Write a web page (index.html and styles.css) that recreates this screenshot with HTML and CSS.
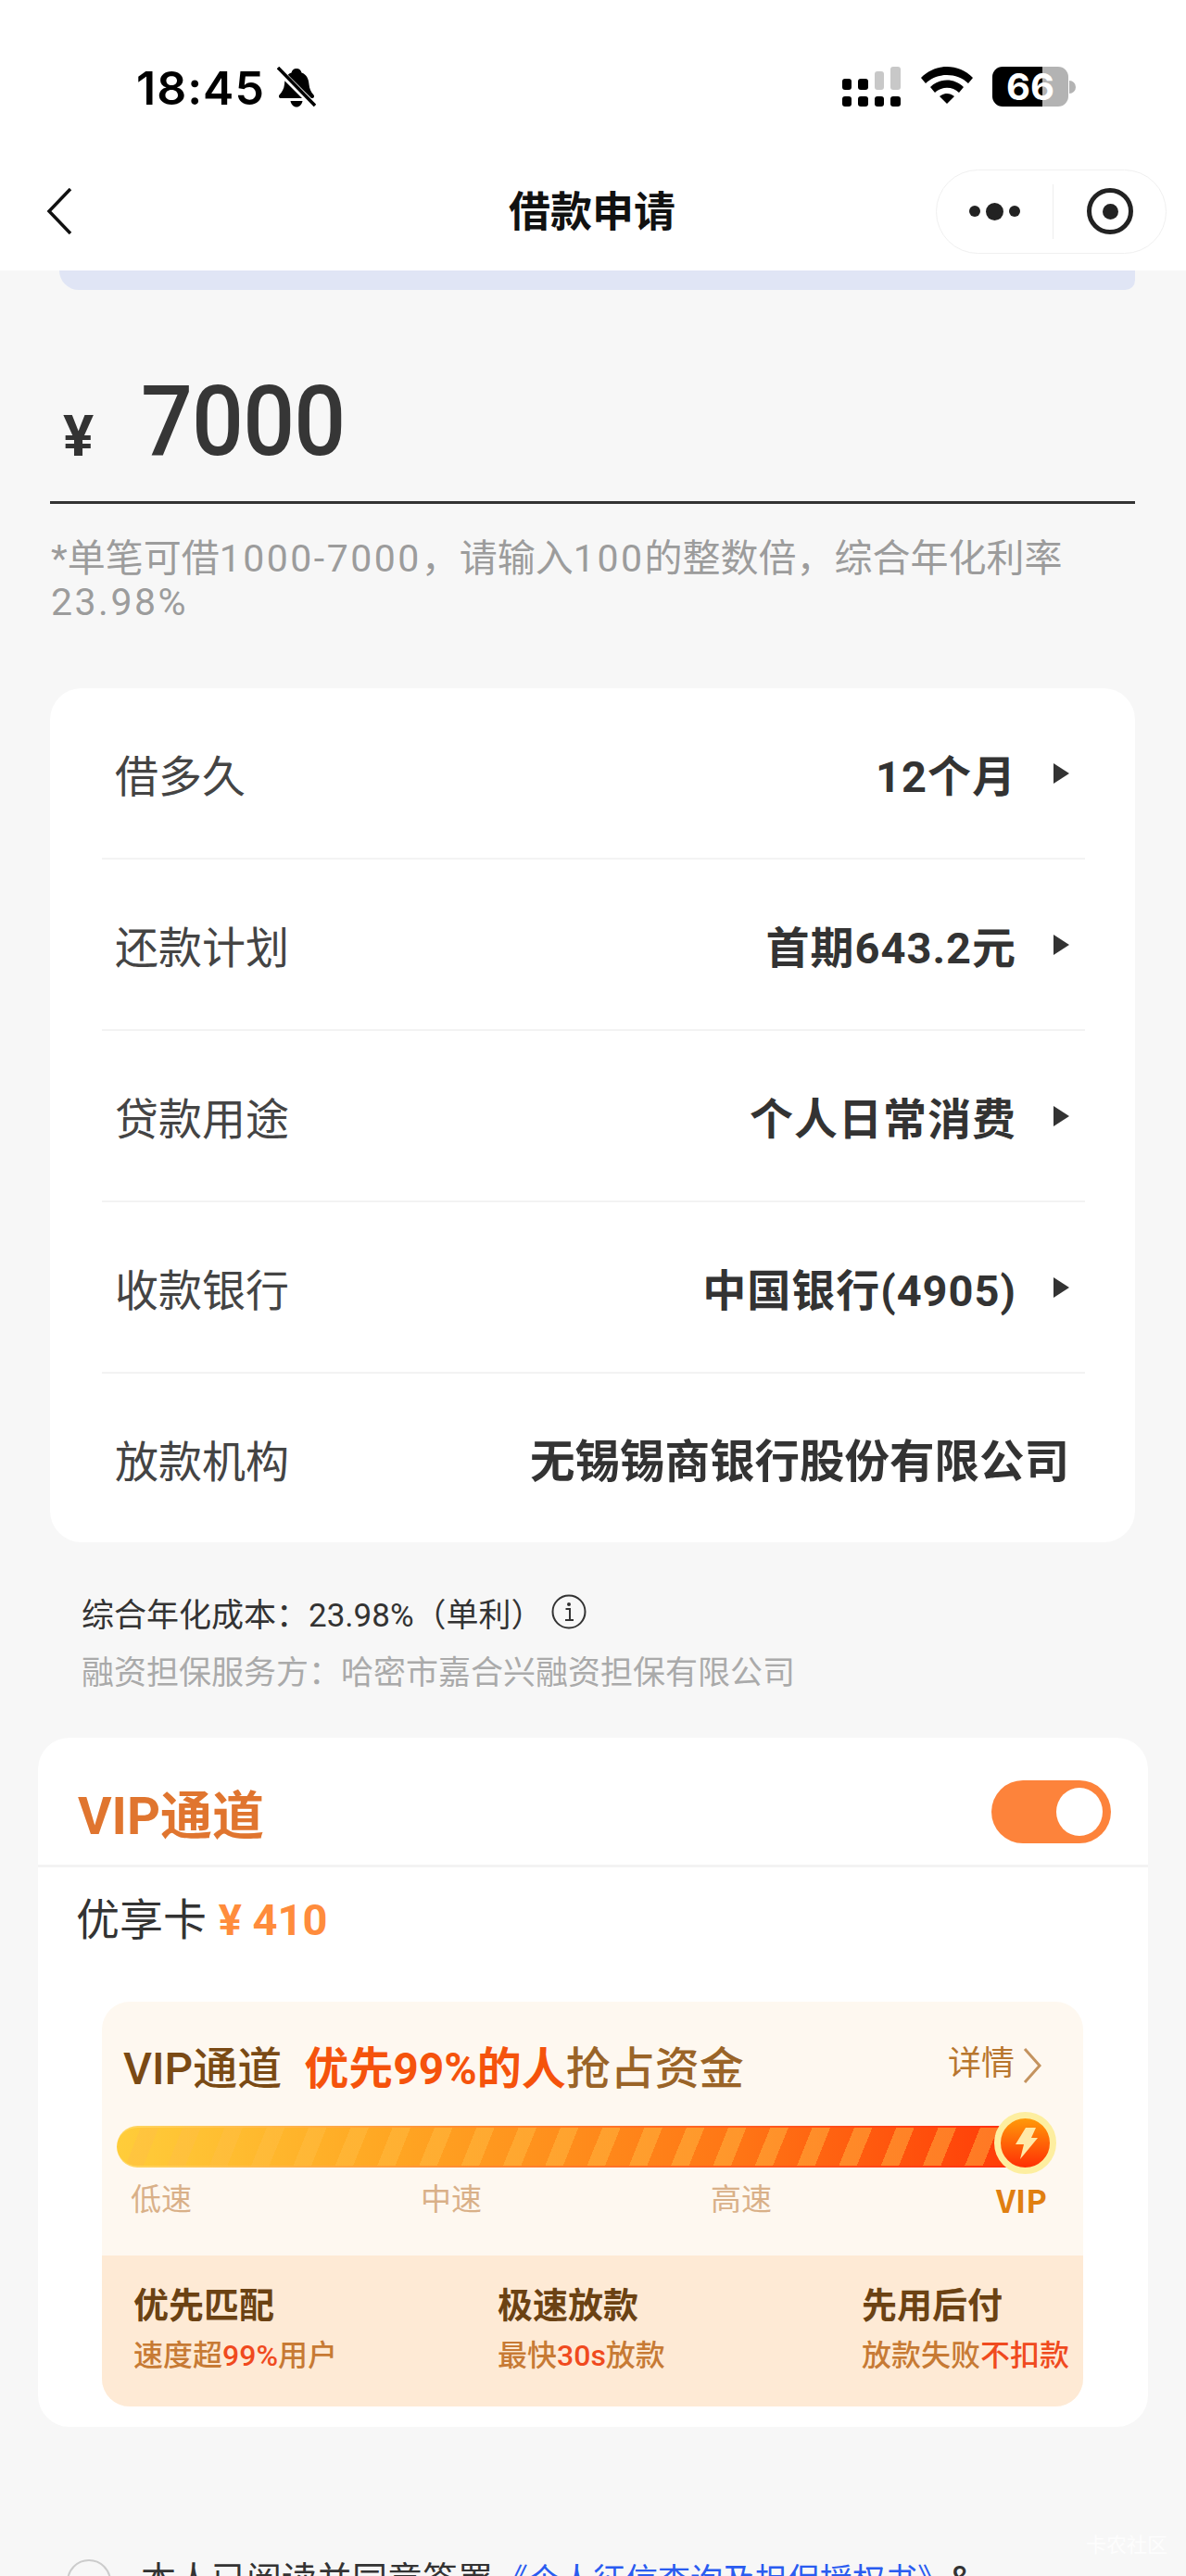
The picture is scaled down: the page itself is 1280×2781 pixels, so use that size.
FILE: index.html
```html
<!DOCTYPE html>
<html lang="zh-CN">

<head>
    <meta charset="UTF-8">
    <meta name="viewport" content="width=device-width, initial-scale=1.0">
    <title>借款申请</title>
    <link rel="stylesheet" href="styles.css">
</head>

<body>
    <div class="page">

        <header class="top">
            <div class="status">
                <div class="status-left">
                    <span class="time">18:45</span>
                    <svg class="bell" width="42" height="46" viewBox="0 0 42 46">
                        <path d="M21 2c3 0 5 2 5.500 4.500C32 8.500 34 13 34.500 19c.5 5 2 8 5 11.500 1.200 1.500.3 3.500-1.500 3.500H4c-1.800 0-2.700-2-1.500-3.500C5.500 27 7.500 24 8 19 8.500 13 10 8.500 15.500 6.500 16 4 18 2 21 2z" fill="#000"/>
                        <path d="M14.500 37h13c-.8 4-3.400 6.500-6.500 6.500s-5.700-2.500-6.500-6.500z" fill="#000"/>
                        <path d="M2 4l38 38" stroke="#fff" stroke-width="7"/>
                        <path d="M1 1l40 41" stroke="#000" stroke-width="3.500"/>
                    </svg>
                </div>
                <div class="status-right">
                    <svg class="signal" width="64" height="44" viewBox="0 0 64 44">
                        <rect x="0" y="13" width="10" height="12" rx="3" fill="#000"/>
                        <rect x="17" y="13" width="11" height="12" rx="3" fill="#000"/>
                        <rect x="35" y="5" width="10" height="20" rx="3" fill="#c8c8c8"/>
                        <rect x="52" y="0" width="11" height="25" rx="3" fill="#c8c8c8"/>
                        <rect x="0" y="32" width="10" height="11" rx="3" fill="#000"/>
                        <rect x="17" y="32" width="11" height="11" rx="3" fill="#000"/>
                        <rect x="35" y="32" width="10" height="11" rx="3" fill="#000"/>
                        <rect x="52" y="32" width="11" height="11" rx="3" fill="#000"/>
                    </svg>
                    <svg class="wifi" width="56" height="40" viewBox="0 0 56 40">
                        <path d="M0 12C15-4 41-4 56 12l-5 6C39 6 17 6 5 18z" fill="#000"/>
                        <path d="M10 22c10-10 26-10 36 0l-5 6c-7-7-19-7-26 0z" fill="#000"/>
                        <path d="M20 32c5-4 11-4 16 0l-8 8z" fill="#000"/>
                    </svg>
                    <div class="battery">
                        <div class="battery-body">
                            <span class="battery-num">66</span>
                        </div>
                        <div class="battery-cap"></div>
                    </div>
                </div>
            </div>
            <nav class="nav">
                <svg class="back" width="28" height="50" viewBox="0 0 28 50">
                    <path d="M26 1L3 25l23 24" fill="none" stroke="#111" stroke-width="3.500"/>
                </svg>
                <h1 class="nav-title">借款申请</h1>
                <div class="capsule">
                    <div class="capsule-dots">
                        <i class="dot"></i>
                        <i class="dot dot-big"></i>
                        <i class="dot"></i>
                    </div>
                    <div class="capsule-line"></div>
                    <div class="capsule-target"><i></i></div>
                </div>
            </nav>
        </header>

        <div class="banner"></div>

        <section class="amount">
            <span class="amount-sign">¥</span>
            <span class="amount-num">7000</span>
        </section>
        <p class="hint">*单笔可借<span>1000-7000</span>，请输入<span>100</span>的整数倍，综合年化利率<br><span>23.98%</span></p>

        <section class="card">
            <div class="row">
                <span class="row-label">借多久</span>
                <span class="row-value">12个月</span>
                <i class="arrow"></i>
            </div>
            <div class="row">
                <span class="row-label">还款计划</span>
                <span class="row-value">首期643.2元</span>
                <i class="arrow"></i>
            </div>
            <div class="row">
                <span class="row-label">贷款用途</span>
                <span class="row-value">个人日常消费</span>
                <i class="arrow"></i>
            </div>
            <div class="row">
                <span class="row-label">收款银行</span>
                <span class="row-value">中国银行(4905)</span>
                <i class="arrow"></i>
            </div>
            <div class="row">
                <span class="row-label">放款机构</span>
                <span class="row-value row-value-last">无锡锡商银行股份有限公司</span>
            </div>
        </section>

        <section class="info">
            <p class="info-cost">
                <span>综合年化成本：</span><span class="info-rate">23.98%（单利）</span>
                <svg class="info-icon" width="38" height="38" viewBox="0 0 38 38">
                    <circle cx="19" cy="19" r="17.500" fill="none" stroke="#333" stroke-width="2"/>
                    <circle cx="19" cy="11" r="2" fill="#333"/>
                    <path d="M15.500 16H20v12M15 28h9" fill="none" stroke="#333" stroke-width="2"/>
                </svg>
            </p>
            <p class="info-guarantee">融资担保服务方：<span class="info-company">哈密市嘉合兴融资担保有限公司</span></p>
        </section>

        <section class="vip">
            <div class="vip-head">
                <h2 class="vip-title">VIP通道</h2>
                <div class="switch"><i></i></div>
            </div>
            <p class="vip-price">优享卡 <strong>¥ 410</strong></p>

            <div class="speed">
                <div class="speed-top">
                    <div class="speed-head">
                        <p class="speed-title">VIP通道<em>优先99%的人</em><span>抢占资金</span></p>
                        <div class="speed-more">
                            详情
                            <svg width="22" height="40" viewBox="0 0 22 40">
                                <path d="M3 2l16 18L3 38" fill="none" stroke="#c4935f" stroke-width="3"/>
                            </svg>
                        </div>
                    </div>
                    <div class="bar">
                        <div class="bar-fill"></div>
                        <div class="bar-knob">
                            <svg width="26" height="34" viewBox="0 0 26 34">
                                <path d="M13 0h11l-5 11h7L7 34l4-16H2z" fill="#ffe9a8"/>
                            </svg>
                        </div>
                    </div>
                    <div class="bar-labels">
                        <span>低速</span>
                        <span>中速</span>
                        <span>高速</span>
                        <span class="bar-vip">VIP</span>
                    </div>
                </div>
                <div class="speed-bottom">
                    <div class="perk">
                        <h3>优先匹配</h3>
                        <p>速度超<b>99%</b>用户</p>
                    </div>
                    <div class="perk">
                        <h3>极速放款</h3>
                        <p>最快<b>30s</b>放款</p>
                    </div>
                    <div class="perk">
                        <h3>先用后付</h3>
                        <p>放款失败<b>不扣款</b></p>
                    </div>
                </div>
            </div>
        </section>

        <div class="agree">
            <i class="agree-check"></i>
            <p class="agree-text">本人已阅读并同意签署<a>《个人征信查询及担保授权书》</a>&amp;</p>
        </div>

        <span class="watermark">卡农社区</span>
    </div>
</body>

</html>
```

FILE: styles.css
```css
html, body {
    margin: 0;
    padding: 0;
    height: 2781px;
    overflow: hidden;
}

body {
    font-family: Roboto, "Noto Sans CJK SC", sans-serif;
    color: #333;
    background-color: #f7f7f7;
    text-spacing-trim: space-all;
}

p, h1, h2, h3 {
    margin: 0;
    font-weight: normal;
}

.page {
    position: relative;
    width: 1280px;
    height: 2781px;
    overflow: hidden;
}

/* Status bar and nav */
.top {
    height: 292px;
    background-color: #fff;
}

.status {
    display: flex;
    justify-content: space-between;
    height: 182px;
    padding: 72px 119px 0 147px;
    box-sizing: border-box;
}

.status-left {
    display: flex;
    align-items: flex-start;
    gap: 13px;
}

.time {
    font-family: Inter, sans-serif;
    font-size: 50px;
    font-weight: 600;
    line-height: 46px;
    letter-spacing: 1px;
    color: #000;
}

.status-right {
    display: flex;
    align-items: flex-start;
    gap: 21px;
}

.battery {
    display: flex;
    align-items: center;
}

.battery-body {
    width: 82px;
    height: 43px;
    border-radius: 11px;
    background: linear-gradient(90deg, #000 66%, #b3b3b3 66%);
    text-align: center;
}

.battery-num {
    font-family: Inter, sans-serif;
    font-size: 40px;
    font-weight: 700;
    line-height: 43px;
    color: #fff;
}

.battery-cap {
    width: 7px;
    height: 14px;
    margin-left: 1px;
    border-radius: 0 7px 7px 0;
    background-color: #b3b3b3;
}

.nav {
    display: flex;
    align-items: center;
    height: 92px;
    padding: 0 21px 0 50px;
}

.nav-title {
    flex: 1;
    padding: 0 0 5px 190px;
    text-align: center;
    font-size: 45px;
    font-weight: 700;
    color: #111;
}

.capsule {
    display: flex;
    align-items: center;
    width: 249px;
    height: 91px;
    border: 1px solid #f0f0f0;
    border-radius: 46px;
    box-sizing: border-box;
}

.capsule-dots {
    display: flex;
    align-items: center;
    justify-content: center;
    gap: 5px;
    width: 125px;
}

.dot {
    width: 12px;
    height: 12px;
    border-radius: 50%;
    background-color: #222;
}

.dot-big {
    width: 19px;
    height: 19px;
    margin: 0 1px;
}

.capsule-line {
    width: 1px;
    height: 59px;
    background-color: #eee;
}

.capsule-target {
    display: flex;
    align-items: center;
    justify-content: center;
    width: 50px;
    height: 50px;
    margin-left: 36px;
    border: 5px solid #222;
    border-radius: 50%;
    box-sizing: border-box;
}

.capsule-target i {
    width: 17px;
    height: 17px;
    border-radius: 50%;
    background-color: #222;
}

.banner {
    height: 21px;
    margin: 0 55px 0 64px;
    border-radius: 0 0 18px 36px;
    background-color: #e0e5f5;
}

/* Amount */
.amount {
    display: flex;
    align-items: flex-end;
    height: 231px;
    margin: 0 55px 0 54px;
    padding-left: 14px;
    border-bottom: 3px solid #333;
    box-sizing: border-box;
}

.amount-sign {
    width: 84px;
    margin-bottom: 36px;
    font-size: 62px;
    font-weight: 700;
    line-height: 68px;
    color: #333;
}

.amount-num {
    margin-bottom: 24px;
    font-size: 106px;
    font-weight: 500;
    line-height: 124px;
    letter-spacing: -1px;
    color: #363636;
    transform: scaleX(0.93);
    transform-origin: left;
}

.hint {
    height: 199px;
    margin-left: 55px;
    padding-top: 36px;
    box-sizing: border-box;
    font-size: 41px;
    line-height: 47px;
    color: #9c9c9c;
}

.hint span {
    letter-spacing: 2.500px;
}

/* Loan rows */
.card {
    height: 922px;
    margin: 0 55px 0 54px;
    padding: 0 56px;
    border-radius: 34px;
    background-color: #fff;
    box-sizing: border-box;
}

.row {
    display: flex;
    align-items: center;
    height: 185px;
    margin: 0 -2px 0 0;
    padding: 0 17px 0 14px;
    border-bottom: 2px solid #f3f3f3;
    box-sizing: border-box;
}

.row:last-child {
    border-bottom: 0;
    height: 182px;
}

.row-label {
    flex: 1;
    font-size: 47px;
    color: #444;
}

.row-value {
    font-size: 47px;
    font-weight: 700;
    letter-spacing: 1px;
    color: #333;
}

.row-value-last {
    font-size: 48.500px;
    letter-spacing: 0;
}

.arrow {
    width: 0;
    height: 0;
    margin-left: 40px;
    border-left: 17px solid #333;
    border-top: 11px solid transparent;
    border-bottom: 11px solid transparent;
}

/* Rate info */
.info {
    height: 211px;
    padding: 50px 0 0 88px;
    box-sizing: border-box;
}

.info-cost {
    display: flex;
    align-items: center;
    height: 50px;
    font-size: 35px;
    color: #333;
}

.info-icon {
    margin-left: 8px;
}

.info-guarantee {
    margin-top: 17px;
    font-size: 35px;
    line-height: 50px;
    color: #aaa;
}

/* VIP card */
.vip {
    height: 744px;
    margin: 0 41px;
    border-radius: 34px;
    background-color: #fff;
}

.vip-head {
    display: flex;
    align-items: center;
    justify-content: space-between;
    height: 140px;
    padding: 22px 0 0 43px;
    border-bottom: 3px solid #f3f3f3;
    box-sizing: border-box;
}

.vip-title {
    font-size: 56px;
    font-weight: 700;
    color: #e0752f;
}

.switch {
    display: flex;
    align-items: center;
    justify-content: flex-end;
    width: 129px;
    height: 68px;
    margin-right: 40px;
    padding-right: 9px;
    border-radius: 34px;
    background-color: #fd833b;
    box-sizing: border-box;
}

.switch i {
    width: 50px;
    height: 52px;
    border-radius: 50%;
    background-color: #fff;
}

.vip-price {
    height: 145px;
    padding: 23px 0 0 41px;
    box-sizing: border-box;
    font-size: 47px;
    line-height: 68px;
    color: #333;
}

.vip-price strong {
    margin-left: 1px;
    font-weight: 700;
    color: #ff8c3c;
}

.speed {
    height: 437px;
    margin: 0 70px 0 69px;
    border-radius: 30px;
    overflow: hidden;
    background-color: #fef8f0;
}

.speed-top {
    height: 274px;
    padding: 0 0 0 16px;
    box-sizing: border-box;
}

.speed-head {
    display: flex;
    justify-content: space-between;
    height: 134px;
    padding: 40px 44px 0 7px;
    box-sizing: border-box;
}

.speed-title {
    font-size: 48px;
    font-weight: 500;
    line-height: 66px;
    color: #7a4a14;
}

.speed-title em {
    margin-left: 24px;
    font-style: normal;
    font-weight: 700;
    color: #f5530c;
}

.speed-title span {
    color: #9a6428;
}

.speed-more {
    display: flex;
    align-items: flex-start;
    gap: 8px;
    font-size: 36px;
    line-height: 54px;
    color: #b8762e;
}

.speed-more svg {
    margin-top: 9px;
}

.bar {
    position: relative;
    width: 964px;
    height: 45px;
}

.bar-fill {
    height: 100%;
    border: 2px solid transparent;
    border-left: 0;
    border-radius: 23px 0 0 23px;
    box-sizing: border-box;
    background:
        repeating-linear-gradient(112deg, rgba(255, 190, 70, 0) 0 24px, rgba(255, 190, 70, 0.45) 24px 42px) padding-box,
        linear-gradient(90deg, #ffcd3a 0%, #ffa723 30%, #ff7515 70%, #ff3d08 100%) padding-box,
        linear-gradient(90deg, #ffd860, #ff8a30 40%, #ff3010) border-box;
}

.bar-knob {
    position: absolute;
    top: -15px;
    right: -50px;
    display: flex;
    align-items: center;
    justify-content: center;
    width: 53px;
    height: 53px;
    border: 7px solid #fdeea0;
    border-radius: 50%;
    background: linear-gradient(180deg, #ff9a0a, #ff2f05);
}

.bar-labels {
    display: flex;
    height: 50px;
    margin-top: 10px;
    padding-left: 15px;
    font-size: 33px;
    line-height: 50px;
    color: #d9b088;
}

.bar-labels span {
    width: 313px;
    flex-shrink: 0;
}

.bar-labels .bar-vip {
    width: auto;
    margin-left: -5px;
    font-family: "Noto Sans CJK SC", sans-serif;
    font-size: 34px;
    font-weight: 700;
    color: #e07f10;
}

.speed-bottom {
    display: flex;
    height: 163px;
    padding: 26px 0 0 34px;
    box-sizing: border-box;
    background-color: #feead5;
}

.perk {
    width: 393px;
    flex-shrink: 0;
}

.perk h3 {
    font-size: 38px;
    font-weight: 700;
    line-height: 56px;
    color: #6b4213;
}

.perk p {
    margin-top: 1px;
    font-size: 32px;
    font-weight: 500;
    line-height: 50px;
    white-space: nowrap;
    color: #c77a34;
}

.perk b {
    font-weight: 500;
    color: #f04a1e;
}

/* Agreement line, cut off by the window */
.agree {
    display: flex;
    align-items: flex-start;
    margin-top: 143px;
    padding-left: 72px;
}

.agree-check {
    width: 48px;
    height: 48px;
    border: 2px solid #ccc;
    border-radius: 50%;
    box-sizing: border-box;
}

.agree-text {
    margin: 0 0 0 32px;
    font-size: 38px;
    line-height: 44px;
    white-space: nowrap;
    color: #333;
}

.agree-text a {
    font-size: 35px;
    margin-left: 3px;
    color: #2a5cf0;
}

.watermark {
    position: absolute;
    right: 20px;
    bottom: 20px;
    font-size: 22px;
    color: rgba(255, 255, 255, 0.8);
}
```
